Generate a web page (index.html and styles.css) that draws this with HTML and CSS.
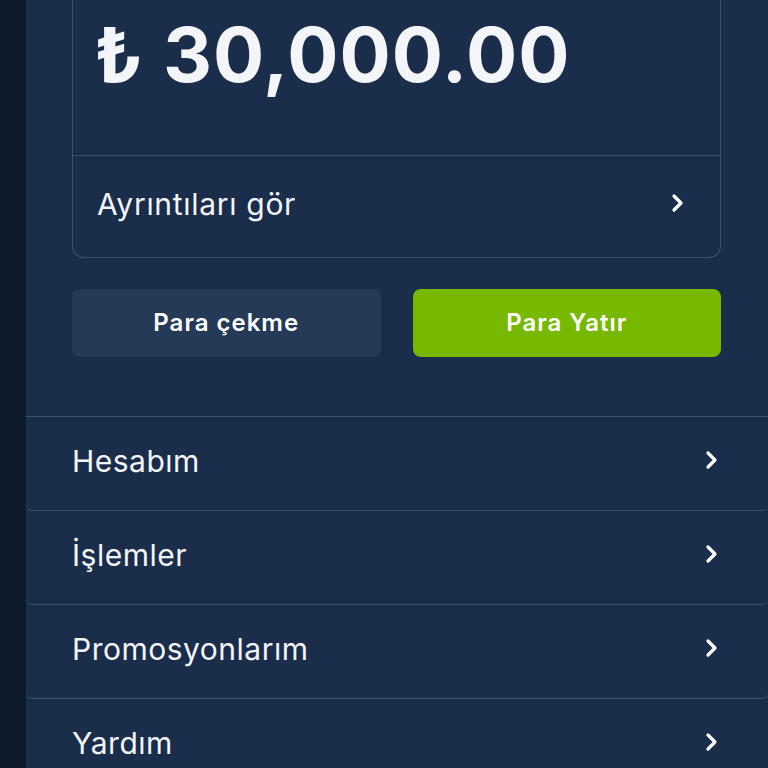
FILE: index.html
```html
<!DOCTYPE html>
<html lang="tr">
<head>
    <meta charset="UTF-8" />
    <meta name="viewport" content="width=device-width, initial-scale=1.0" />
    <title>Cüzdan</title>
    <link rel="stylesheet" href="styles.css">
</head>
<body>

<div class="page">
    <div class="rail"></div>

    <div class="panel">
        <div class="balance-card">
            <div class="amount">₺ 30,000.00</div>
            <a class="card-link" href="#">
                <span>Ayrıntıları gör</span>
                <svg class="chev" viewBox="0 0 12 20"><path d="M2.5 3 L9.5 10 L2.5 17" /></svg>
            </a>
        </div>

        <div class="actions">
            <button class="btn btn-dark">Para çekme</button>
            <button class="btn btn-green">Para Yatır</button>
        </div>

        <ul class="menu">
            <li class="menu-row">
                <span>Hesabım</span>
                <svg class="chev" viewBox="0 0 12 20"><path d="M2.5 3 L9.5 10 L2.5 17" /></svg>
            </li>
            <li class="menu-row">
                <span>İşlemler</span>
                <svg class="chev" viewBox="0 0 12 20"><path d="M2.5 3 L9.5 10 L2.5 17" /></svg>
            </li>
            <li class="menu-row">
                <span>Promosyonlarım</span>
                <svg class="chev" viewBox="0 0 12 20"><path d="M2.5 3 L9.5 10 L2.5 17" /></svg>
            </li>
            <li class="menu-row">
                <span>Yardım</span>
                <svg class="chev" viewBox="0 0 12 20"><path d="M2.5 3 L9.5 10 L2.5 17" /></svg>
            </li>
        </ul>
    </div>
</div>

</body>
</html>
```

FILE: styles.css
```css
body {
    margin: 0;
    background: #0d1a2a;
    font-family: Inter, "Noto Sans", sans-serif;
    color: #f3f5f8;
    overflow: hidden;
}

.page {
    display: flex;
    height: 768px;
}

.rail {
    width: 26px;
    background: #0d1a2a;
}

.panel {
    flex: 1;
    background: #1a2d4a;
}

.balance-card {
    margin: 0 47px 0 46px;
    border: 1px solid #3b5170;
    border-top: none;
    border-radius: 0 0 12px 12px;
}

.amount {
    height: 156px;
    box-sizing: border-box;
    padding: 16px 0 0 21px;
    font-size: 76px;
    line-height: 1;
    font-weight: 700;
    letter-spacing: 1px;
    border-bottom: 1px solid #3b5170;
}

.card-link {
    display: flex;
    align-items: center;
    justify-content: space-between;
    box-sizing: border-box;
    height: 101px;
    padding: 0 36px 6px 24px;
    color: #f3f5f8;
    text-decoration: none;
    font-size: 30px;
    letter-spacing: 0.7px;
}

.chev {
    width: 13px;
    height: 20px;
    margin-bottom: 2px;
    fill: none;
    stroke: #ffffff;
    stroke-width: 3.2;
    stroke-linecap: round;
    stroke-linejoin: round;
}

.actions {
    display: flex;
    gap: 32px;
    margin: 31px 47px 0 46px;
}

.btn {
    flex: 1;
    height: 68px;
    padding-bottom: 2px;
    border: none;
    border-radius: 8px;
    font-family: Inter, "Noto Sans", sans-serif;
    font-size: 24px;
    font-weight: 600;
    letter-spacing: 1px;
    color: #ffffff;
    cursor: pointer;
}

.btn-dark {
    background: #253a57;
}

.btn-green {
    background: #76b900;
}

.menu {
    list-style: none;
    margin: 59px 0 0;
    padding: 0;
    border-top: 1px solid #3b5170;
}

.menu-row {
    display: flex;
    align-items: center;
    justify-content: space-between;
    box-sizing: border-box;
    height: 94px;
    padding: 0 50px 6px 46px;
    font-size: 30px;
    letter-spacing: 0.5px;
    border-bottom: 1px solid #3b5170;
    border-radius: 0 0 6px 6px;
}
```
